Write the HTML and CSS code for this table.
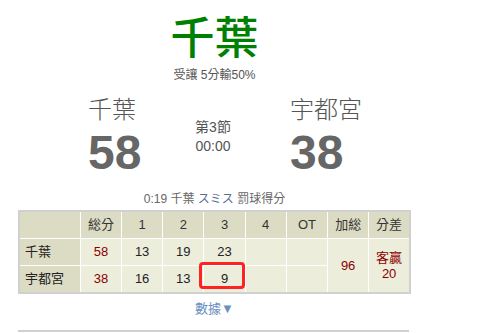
FILE: index.html
```html
<!DOCTYPE html>
<html lang="zh-Hant">
<head>
<meta charset="utf-8">
<link rel="stylesheet" href="styles.css">
</head>
<body>
<div class="page">
  <h1 class="title">千葉</h1>
  <div class="handicap">受讓 5分輸50%</div>
  <div class="scoreboard">
    <div class="team">
      <div class="team-name">千葉</div>
      <div class="team-score">58</div>
    </div>
    <div class="period">
      <div>第3節</div>
      <div>00:00</div>
    </div>
    <div class="team">
      <div class="team-name">宇都宮</div>
      <div class="team-score">38</div>
    </div>
  </div>
  <div class="event">0:19 千葉 <span class="player">スミス</span> 罰球得分</div>
  <div class="table-wrap">
    <table class="scores">
      <colgroup>
        <col class="c-first"><col class="c"><col class="c"><col class="c"><col class="c"><col class="c"><col class="c"><col class="c"><col class="c">
      </colgroup>
      <tr class="head">
        <th></th><th>総分</th><th>1</th><th>2</th><th>3</th><th>4</th><th>OT</th><th>加総</th><th>分差</th>
      </tr>
      <tr>
        <th class="name">千葉</th><td class="red">58</td><td>13</td><td>19</td><td>23</td><td></td><td></td>
        <td class="red" rowspan="2">96</td><td class="red" rowspan="2">客贏<br>20</td>
      </tr>
      <tr>
        <th class="name">宇都宮</th><td class="red">38</td><td>16</td><td>13</td><td>9</td><td></td><td></td>
      </tr>
    </table>
    <div class="mark"></div>
  </div>
  <div class="more">數據▼</div>
  <div class="rule"></div>
</div>
</body>
</html>
```
FILE: styles.css
```css
html, body {
  margin: 0;
  padding: 0;
  background: #fff;
}
body {
  font-family: "Liberation Sans", "Noto Sans CJK TC", sans-serif;
  color: #555;
}
.page {
  width: 393px;
  margin-left: 18px;
  display: flex;
  flex-direction: column;
  align-items: center;
}
.title {
  margin: 16px 0 0 0;
  font-size: 44px;
  line-height: 46px;
  font-weight: 500;
  color: #008000;
}
.handicap {
  margin-top: 6px;
  font-size: 12px;
  line-height: 14px;
  color: #555;
}
.scoreboard {
  margin-top: 14px;
  width: 100%;
  display: grid;
  grid-template-columns: 70px 78px 94px 30px auto;
}
.team:first-child {
  grid-column: 2;
}
.period {
  grid-column: 3;
}
.team:last-child {
  grid-column: 5;
}
.team-name {
  font-size: 24px;
  line-height: 28px;
  font-weight: 300;
  color: #555;
}
.team-score {
  font-size: 48px;
  line-height: 50px;
  font-weight: 700;
  color: #666;
  margin-top: 4px;
}
.period {
  text-align: center;
  font-size: 14px;
  line-height: 19px;
  color: #555;
  padding-top: 22px;
}
.event {
  margin-top: 13px;
  font-size: 12px;
  line-height: 16px;
  color: #666;
}
.player {
  color: #5a6f90;
}
.table-wrap {
  position: relative;
  margin-top: 3px;
}
.scores {
  border-collapse: collapse;
  table-layout: fixed;
  width: 393px;
  border: 2px solid #d0d0d0;
  font-size: 13px;
}
.c-first { width: 61px; }
.c { width: 41px; }
.scores th, .scores td {
  border: 1px solid #fff;
  height: 26px;
  padding: 0;
  text-align: center;
  font-weight: 400;
  color: #222;
  background: #ededdc;
  line-height: 16px;
}
.scores .head th {
  background: #dcdcc4;
  color: #333;
}
.scores th.name {
  background: #dcdcc4;
  text-align: left;
  padding-left: 5px;
  color: #222;
}
.scores td.red {
  color: #8b0000;
}
.mark {
  position: absolute;
  left: 181px;
  top: 52px;
  width: 40px;
  height: 21px;
  border: 3px solid #f22;
  border-radius: 4px;
}
.more {
  margin-top: 7px;
  font-size: 13px;
  line-height: 16px;
  color: #6b8fbf;
}
.rule {
  margin-top: 13px;
  width: 391px;
  height: 2px;
  background: #d0d0d0;
  align-self: flex-start;
}
```
